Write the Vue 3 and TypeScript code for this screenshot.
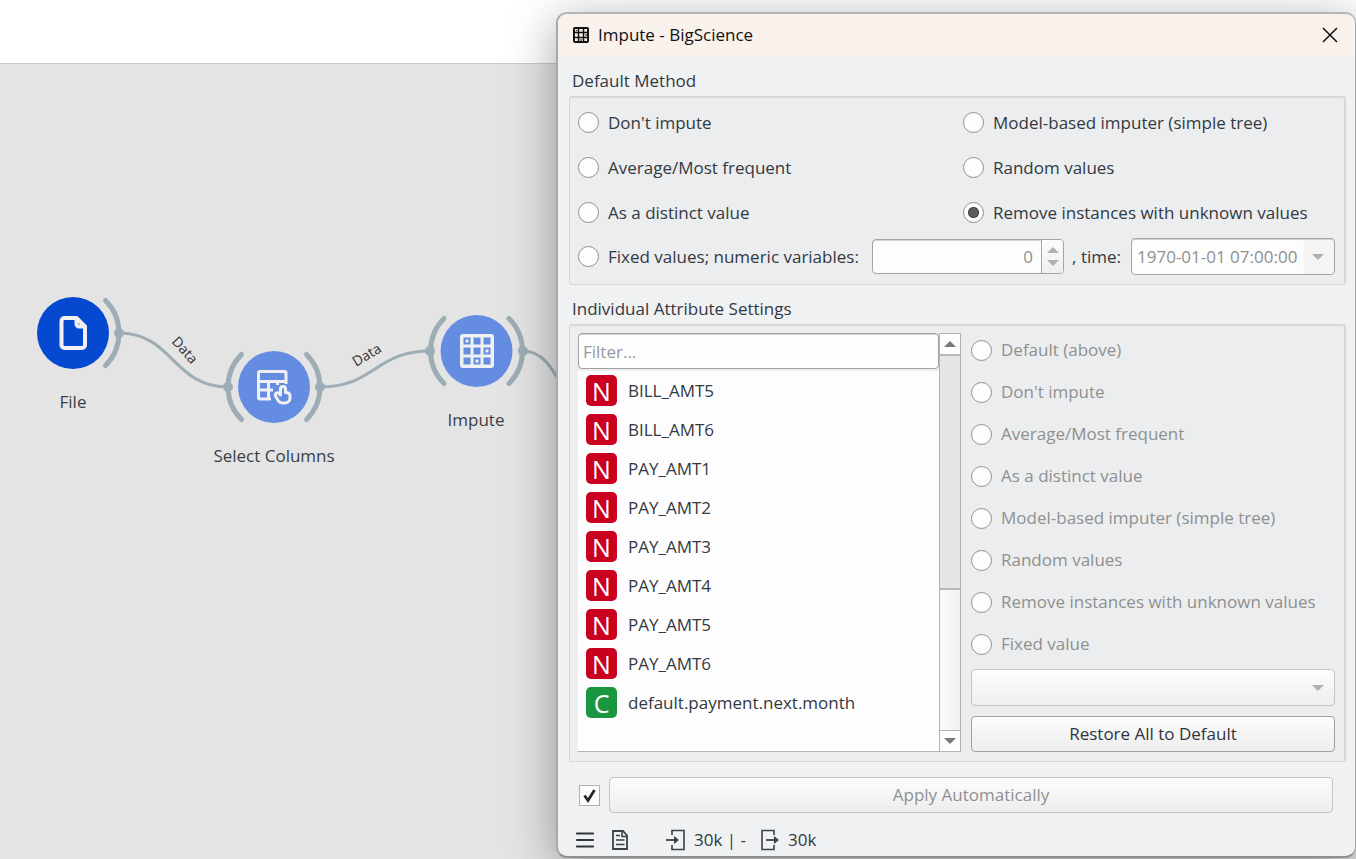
<script setup lang="ts">
import { ref } from 'vue'

interface Method {
  id: string
  label: string
}

interface Attribute {
  name: string
  kind: 'N' | 'C'
}

const method = ref('remove')
const individual = ref('')
const filter = ref('')
const autoApply = ref(true)

const defaultMethods: Method[] = [
  { id: 'none', label: "Don't impute" },
  { id: 'model', label: 'Model-based imputer (simple tree)' },
  { id: 'average', label: 'Average/Most frequent' },
  { id: 'random', label: 'Random values' },
  { id: 'distinct', label: 'As a distinct value' },
  { id: 'remove', label: 'Remove instances with unknown values' },
]

const individualMethods: Method[] = [
  { id: 'default', label: 'Default (above)' },
  { id: 'none', label: "Don't impute" },
  { id: 'average', label: 'Average/Most frequent' },
  { id: 'distinct', label: 'As a distinct value' },
  { id: 'model', label: 'Model-based imputer (simple tree)' },
  { id: 'random', label: 'Random values' },
  { id: 'remove', label: 'Remove instances with unknown values' },
  { id: 'fixed', label: 'Fixed value' },
]

const attributes: Attribute[] = [
  { name: 'BILL_AMT5', kind: 'N' },
  { name: 'BILL_AMT6', kind: 'N' },
  { name: 'PAY_AMT1', kind: 'N' },
  { name: 'PAY_AMT2', kind: 'N' },
  { name: 'PAY_AMT3', kind: 'N' },
  { name: 'PAY_AMT4', kind: 'N' },
  { name: 'PAY_AMT5', kind: 'N' },
  { name: 'PAY_AMT6', kind: 'N' },
  { name: 'default.payment.next.month', kind: 'C' },
]

const cells = [0, 1, 2].flatMap((r) => [0, 1, 2].map((c) => ({ r, c })))
const marked = [{ r: 0, c: 0 }, { r: 1, c: 2 }, { r: 2, c: 1 }]
</script>

<template>
  <main class="page">
    <header class="toolbar"></header>
    <section class="canvas" aria-label="Workflow"></section>

    <svg class="workflow" width="640" height="520" viewBox="0 0 640 520">
      <g class="link">
        <path d="M119 333C173 333 173 387 228 387" />
        <path d="M320 387C375 387 375 351 430 351" />
        <path d="M523 351C562 351 562 420 600 420" />
      </g>
      <g class="arc">
        <path d="M105.500 300.500A46 46 0 0 1 105.500 365.500" />
        <path d="M241.500 354.500A46 46 0 0 0 241.500 419.500" />
        <path d="M306.500 354.500A46 46 0 0 1 306.500 419.500" />
        <path d="M444 318.500A46 46 0 0 0 444 383.500" />
        <path d="M509 318.500A46 46 0 0 1 509 383.500" />
      </g>
      <g class="dot">
        <circle cx="119" cy="333" r="5" />
        <circle cx="228" cy="387" r="5" />
        <circle cx="320" cy="387" r="5" />
        <circle cx="430" cy="351" r="5" />
        <circle cx="523" cy="351" r="5" />
      </g>
      <circle class="node-dark" cx="73" cy="333" r="36" />
      <circle class="node" cx="274" cy="387" r="36" />
      <circle class="node" cx="476.500" cy="351" r="36" />

      <path class="glyph wide" d="M76.500 318H64.500a3 3 0 0 0-3 3v24a3 3 0 0 0 3 3h17.500a3 3 0 0 0 3-3V326.500zv6a2.500 2.500 0 0 0 2.500 2.500h6" />

      <g class="glyph">
        <path d="M271 399H260a1.500 1.500 0 0 1-1.500-1.500V373a1.500 1.500 0 0 1 1.500-1.500h24.500a1.500 1.500 0 0 1 1.500 1.500v11M258.500 381.500H286M258.500 390H273M268.500 381.500V399M277.500 381.500V385" />
        <path class="hand" d="M280.500 395v-6a2.500 2.500 0 0 1 5 0v3.500l2 .3c1.500.3 2.500 1.500 2.500 3.200v2c0 3.200-2.700 5-5.500 5h-1.500c-2.200 0-3.800-1-4.800-2.500l-2.700-4.500c-1-2.500 2-4.500 4-2.200l1 1.200z" />
      </g>

      <rect class="solid" x="460" y="334" width="34" height="34" rx="3" />
      <rect v-for="cell in cells" :key="`c${cell.r}${cell.c}`" class="cell" :x="463.5 + cell.c * 10" :y="337.5 + cell.r * 10" width="7" height="7" />
      <rect v-for="cell in marked" :key="`m${cell.r}${cell.c}`" class="solid" :x="465.5 + cell.c * 10" :y="339.5 + cell.r * 10" width="3" height="3" />

      <text class="name" x="73" y="408">File</text>
      <text class="name" x="274" y="462">Select Columns</text>
      <text class="name" x="476" y="426">Impute</text>
      <text class="channel" transform="translate(171 342) rotate(48)">Data</text>
      <text class="channel" transform="translate(356 367) rotate(-31)">Data</text>
    </svg>

    <section class="dialog" role="dialog" aria-labelledby="title">
      <header class="titlebar">
        <svg width="16" height="16" viewBox="0 0 16 16">
          <rect x="1" y="1" width="14" height="14" rx="1" fill="none" stroke="#111" stroke-width="2" />
          <path d="M5.500 1v14M10.500 1v14M1 5.500h14M1 10.500h14" stroke="#111" stroke-width="1.500" />
          <path d="M3 3h1v1H3zM12.500 7h1v2h-1zM7 12.500h2v1H7z" fill="#111" />
        </svg>
        <h1 id="title">Impute - BigScience</h1>
        <button class="close" type="button" aria-label="Close">
          <svg width="16" height="16" viewBox="0 0 16 16"><path d="M1 1l14 14M15 1L1 15" stroke="#111" stroke-width="1.500" /></svg>
        </button>
      </header>

      <div class="body">
        <h2>Default Method</h2>
        <div class="group methods">
          <label v-for="m in defaultMethods" :key="m.id" class="option">
            <input v-model="method" type="radio" name="default-method" :value="m.id" />
            <span>{{ m.label }}</span>
          </label>
          <div class="fixed-row">
            <label class="option">
              <input v-model="method" type="radio" name="default-method" value="fixed" />
              <span>Fixed values; numeric variables:</span>
            </label>
            <div class="spin">
              <input type="text" inputmode="numeric" value="0" aria-label="Numeric value" disabled />
              <div class="steps">
                <button type="button" aria-label="Increase" disabled><svg width="12" height="6" viewBox="0 0 12 6"><path d="M0 6L6 0l6 6z" /></svg></button>
                <button type="button" aria-label="Decrease" disabled><svg width="12" height="6" viewBox="0 0 12 6"><path d="M0 0L6 6l6-6z" /></svg></button>
              </div>
            </div>
            <label class="time-label" for="time">, time:</label>
            <div class="combo time">
              <select id="time" disabled><option>1970-01-01 07:00:00</option></select>
              <svg width="12" height="6" viewBox="0 0 12 6"><path d="M0 0L6 6l6-6z" /></svg>
            </div>
          </div>
        </div>

        <h2>Individual Attribute Settings</h2>
        <div class="group settings">
          <div class="listbox">
            <div class="list-main">
              <input v-model="filter" class="filter" type="text" placeholder="Filter..." aria-label="Filter" />
              <ul>
                <li v-for="a in attributes" :key="a.name">
                  <span class="badge" :class="{ categorical: a.kind === 'C' }">{{ a.kind }}</span>
                  <span>{{ a.name }}</span>
                </li>
              </ul>
            </div>
            <div class="scroll">
              <button type="button" aria-label="Scroll up"><svg width="12" height="6" viewBox="0 0 12 6"><path d="M0 6L6 0l6 6z" /></svg></button>
              <div class="track"></div>
              <div class="thumb"></div>
              <button type="button" aria-label="Scroll down"><svg width="12" height="6" viewBox="0 0 12 6"><path d="M0 0L6 6l6-6z" /></svg></button>
            </div>
          </div>
          <div class="choices">
            <label v-for="m in individualMethods" :key="m.id" class="option">
              <input v-model="individual" type="radio" name="individual-method" :value="m.id" disabled />
              <span>{{ m.label }}</span>
            </label>
            <div class="combo value">
              <select aria-label="Fixed value" disabled></select>
              <svg width="12" height="6" viewBox="0 0 12 6"><path d="M0 0L6 6l6-6z" /></svg>
            </div>
            <button class="push" type="button">Restore All to Default</button>
          </div>
        </div>

        <div class="apply">
          <label class="check">
            <input v-model="autoApply" type="checkbox" aria-label="Apply Automatically" />
            <svg v-if="autoApply" width="13" height="15" viewBox="0 0 13 15"><path d="M1.500 7.500L5 12.500L11.500 2" fill="none" stroke="#25292c" stroke-width="2.800" /></svg>
          </label>
          <button class="push" type="button" disabled>Apply Automatically</button>
        </div>

        <footer class="status">
          <button class="menu" type="button" aria-label="Menu">
            <svg width="20" height="22" viewBox="0 0 20 22"><path d="M2 4.500h16M2 11h16M2 17.500h16" stroke="#2f343d" stroke-width="2.200" stroke-linecap="round" /></svg>
          </button>
          <button class="report" type="button" aria-label="Report">
            <svg width="18" height="22" viewBox="0 0 18 22">
              <path d="M2 2h10l4 4.500V20H2z" fill="none" stroke="#3b4047" stroke-width="1.800" />
              <path d="M11 1.500v6h5.500M5 6.500h4M5 11h8.500M5 15.500h8.500" fill="none" stroke="#3b4047" stroke-width="1.600" />
            </svg>
          </button>
          <span class="io">
            <svg width="20" height="22" viewBox="0 0 20 22">
              <path d="M6 6V1.500h12v19H6V16" fill="none" stroke="#3b4047" stroke-width="1.600" />
              <path d="M0 11h9" stroke="#3b4047" stroke-width="1.800" /><path d="M8 7l5 4-5 4z" fill="#3b4047" />
            </svg>
            <span>30k | -</span>
          </span>
          <span class="io">
            <svg width="20" height="22" viewBox="0 0 20 22">
              <path d="M14 6V1.500H2v19h12V16" fill="none" stroke="#3b4047" stroke-width="1.600" />
              <path d="M6 11h9" stroke="#3b4047" stroke-width="1.800" /><path d="M14 7l5 4-5 4z" fill="#3b4047" />
            </svg>
            <span>30k</span>
          </span>
        </footer>
      </div>
    </section>
  </main>
</template>

<style>
body {
  margin: 0;
}
</style>

<style scoped>
* {
  box-sizing: border-box;
}
.page {
  position: relative;
  display: flex;
  flex-direction: column;
  min-height: 100vh;
  overflow: hidden;
  font-family: "Open Sans", "Noto Sans", sans-serif;
  font-size: 17px;
  line-height: 24px;
  color: #333942;
}
button,
input,
select {
  margin: 0;
  padding: 0;
  font: inherit;
  color: inherit;
}
button {
  border: 0;
  background: none;
}
svg {
  display: block;
}
h1,
h2 {
  margin: 0;
  font-size: 17px;
  font-weight: 400;
}
.toolbar {
  height: 64px;
  background: #fff;
  border-bottom: 1px solid #c9c9c9;
}
.canvas {
  flex: 1;
  background: #e4e4e4;
}
.workflow {
  position: absolute;
  top: 0;
  left: 0;
}
.link {
  fill: none;
  stroke: #9dadb5;
  stroke-width: 3;
}
.arc {
  fill: none;
  stroke: #9dadb5;
  stroke-width: 5;
  stroke-linecap: round;
}
.dot {
  fill: #9dadb5;
}
.node-dark {
  fill: #0549d1;
}
.node {
  fill: #648de2;
}
.glyph {
  fill: none;
  stroke: #f0f0f2;
  stroke-width: 3;
  stroke-linejoin: round;
}
.wide {
  stroke-width: 4;
}
.hand {
  fill: #648de2;
}
.solid {
  fill: #f0f0f2;
}
.cell {
  fill: #648de2;
}
.name {
  text-anchor: middle;
  fill: #3a3f45;
}
.channel {
  font-size: 14px;
  fill: #333;
}

.dialog {
  position: absolute;
  top: 12px;
  left: 556px;
  right: 0;
  border: 2px solid #a9a9a9;
  border-right-width: 1px;
  border-top-color: #b5b5b5;
  border-bottom-color: #8e8f90;
  border-radius: 11px;
  background: #eff1f2;
  box-shadow: 0 10px 48px rgba(0, 0, 0, 0.36);
}
.titlebar {
  display: flex;
  align-items: center;
  gap: 9px;
  height: 43px;
  padding: 0 17px 2px 15px;
  border-radius: 9px 9px 0 0;
  background: #f9f1eb;
  color: #111;
}
.titlebar h1 {
  flex: 1;
}
.body {
  padding: 12px 9px 0 11px;
}
h2 {
  padding-left: 3px;
}
.group {
  margin-top: 3px;
  border: 1px solid #d5d7d8;
  border-top-width: 2px;
  border-right-width: 2px;
  border-radius: 3px;
  background: #ebedee;
}
.methods {
  display: grid;
  grid-template-columns: 1fr 1fr;
  grid-template-rows: repeat(3, 45px) 43px;
  column-gap: 13px;
  margin-bottom: 12px;
  padding: 2px 9px 6px 8px;
}
.option {
  display: flex;
  align-items: center;
  gap: 9px;
  white-space: nowrap;
}
.option input {
  flex: none;
  width: 21px;
  height: 21px;
  appearance: none;
  border: 1px solid #8f9091;
  border-radius: 50%;
  background: #fdfdfd;
}
.option input:checked {
  background: radial-gradient(circle, #5c5f61 0 4px, #3c3f41 5px, #fdfdfd 6px);
}
.fixed-row {
  grid-column: 1 / -1;
  display: flex;
  align-items: center;
}
.spin {
  display: flex;
  width: 192px;
  height: 35px;
  margin-left: auto;
  border: 1px solid #a3a4a5;
  border-radius: 4px;
  background: #fdfdfd;
  box-shadow: inset 0 1px #d4d5d6;
  color: #8f9091;
}
.spin input {
  flex: 1;
  min-width: 0;
  padding-right: 8px;
  border: 0;
  background: none;
  text-align: right;
}
.steps {
  display: flex;
  flex-direction: column;
  justify-content: center;
  gap: 7px;
  width: 22px;
  border-left: 1px solid #a3a4a5;
  background: linear-gradient(#fcfcfc, #eeefef);
  border-radius: 0 3px 3px 0;
}
.steps button {
  display: flex;
  justify-content: center;
}
.steps svg,
.combo svg {
  fill: #b0b1b2;
}
.time-label {
  margin: 0 10px 0 8px;
}
.combo {
  display: grid;
  align-items: center;
}
.combo select,
.combo svg {
  grid-area: 1 / 1;
}
.combo svg {
  justify-self: end;
  margin-right: 11px;
  pointer-events: none;
}
.combo select {
  width: 100%;
  height: 37px;
  padding: 0 5px;
  appearance: none;
  border: 1px solid #c2c4c5;
  border-radius: 4px;
  background: linear-gradient(#fdfdfd, #edeeee);
  color: #8f9091;
  opacity: 1;
}
.time {
  width: 204px;
}
.time select {
  border-color: #a3a4a5;
  background: linear-gradient(90deg, #fdfdfd 171px, #f5f5f5 172px);
  box-shadow: inset 0 1px #d4d5d6;
}

.settings {
  display: grid;
  grid-template-columns: 383fr 364fr;
  column-gap: 10px;
  padding: 3px 9px 9px 8px;
}
.listbox {
  display: flex;
  margin-top: 4px;
  border-bottom: 1px solid #b2b3b4;
}
.list-main {
  display: flex;
  flex-direction: column;
  flex: 1;
  min-width: 0;
}
.filter {
  width: 100%;
  height: 36px;
  padding: 0 4px;
  border: 1px solid #9fa0a1;
  border-radius: 4px;
  background: #fdfdfd;
  box-shadow: inset 0 1px #cfd0d1;
}
.filter::placeholder {
  color: #969a9f;
  opacity: 1;
}
ul {
  flex: 1;
  margin: 2px 0 0;
  padding: 0 0 0 8px;
  list-style: none;
  background: #fdfdfd;
}
li {
  display: flex;
  align-items: center;
  gap: 11px;
  height: 39px;
}
.badge {
  width: 31px;
  height: 31px;
  border-radius: 5px;
  background: #ca0020;
  color: #fff;
  font-size: 25px;
  line-height: 33px;
  text-align: center;
}
.badge.categorical {
  background: #1a9641;
}
.scroll {
  display: flex;
  flex-direction: column;
  width: 22px;
  border: 1px solid #b2b3b4;
  border-bottom: 0;
  background: #fdfdfd;
}
.scroll button {
  display: flex;
  align-items: center;
  justify-content: center;
  height: 20px;
}
.scroll svg {
  fill: #77797c;
}
.track {
  flex: 234;
  border: 2px solid #b8b9ba;
  border-width: 2px 0;
  background: #e6e6e6;
}
.thumb {
  flex: 141;
  border-bottom: 1px solid #b2b3b4;
  background: linear-gradient(90deg, #fdfdfd, #f0f0f0);
}
.choices {
  display: flex;
  flex-direction: column;
  color: #8f9091;
}
.choices .option {
  height: 42px;
}
.value {
  margin: 4px 0 10px;
}
.push {
  height: 36px;
  border: 1px solid #a0a1a2;
  border-radius: 4px;
  background: linear-gradient(#fdfdfd, #ededee);
  color: #2f3440;
}
.push:disabled {
  border-color: #c2c4c5;
  color: #8f9091;
}
.apply {
  display: flex;
  align-items: center;
  gap: 9px;
  margin: 15px 13px 0 10px;
}
.apply .push {
  flex: 1;
}
.check {
  display: grid;
  place-items: center;
}
.check input,
.check svg {
  grid-area: 1 / 1;
}
.check svg {
  pointer-events: none;
}
.check input {
  width: 21px;
  height: 21px;
  appearance: none;
  border: 1px solid #b0b1b2;
  background: #fdfdfd;
}
.status {
  display: flex;
  align-items: center;
  height: 32px;
  margin-top: 11px;
  padding-left: 6px;
}
.report {
  margin: 0 37px 0 16px;
}
.io {
  display: flex;
  align-items: center;
  gap: 8px;
  margin-right: 14px;
}
</style>
